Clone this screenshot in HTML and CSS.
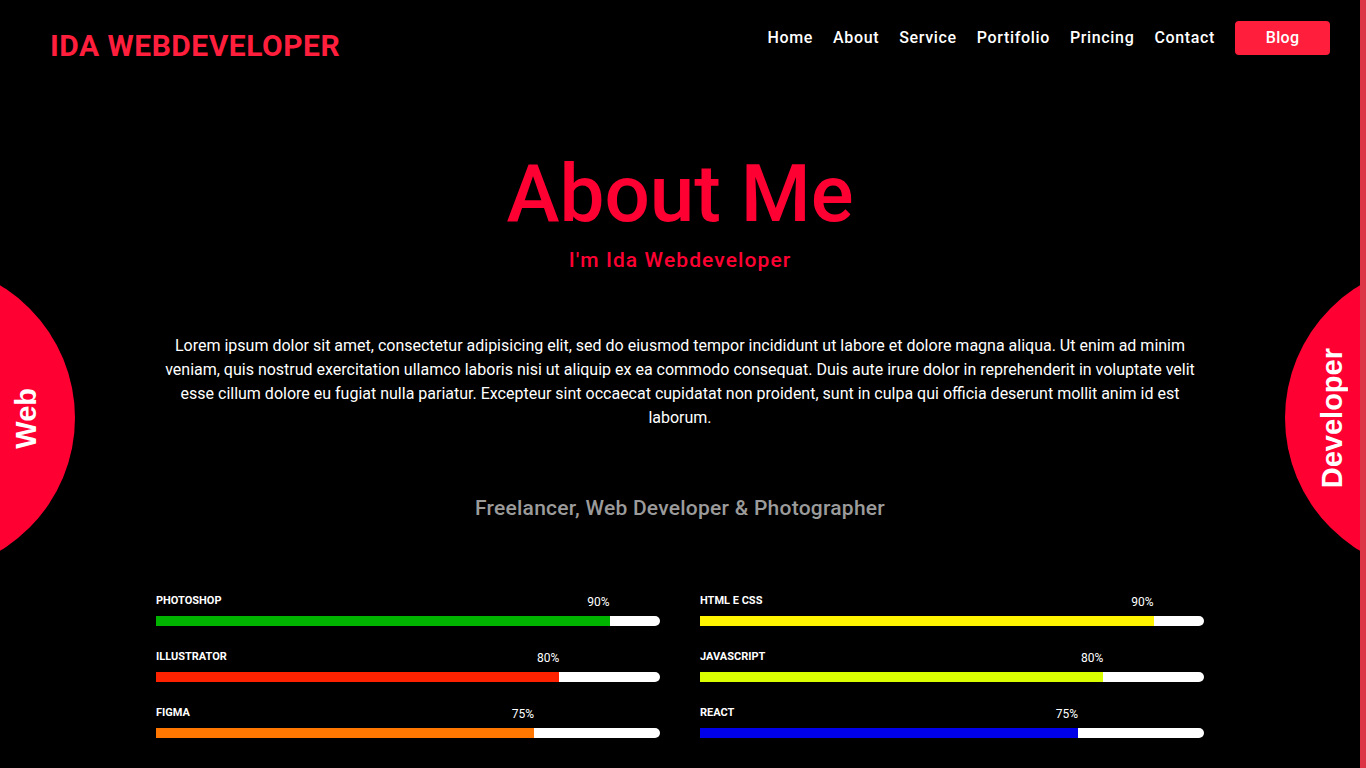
FILE: index.html
```html
<!DOCTYPE html>
<html lang="en">
<head>
<meta charset="utf-8">
<title>Ida Webdeveloper - About</title>
<link rel="stylesheet" href="styles.css">
</head>
<body>
<div class="page">
  <header class="header">
    <a class="logo" href="#">IDA WEBDEVELOPER</a>
    <nav class="nav">
      <a href="#">Home</a>
      <a href="#">About</a>
      <a href="#">Service</a>
      <a href="#">Portifolio</a>
      <a href="#">Princing</a>
      <a href="#">Contact</a>
      <a href="#" class="btn">Blog</a>
    </nav>
  </header>

  <div class="badge badge-left"><span>Web</span></div>
  <div class="badge badge-right"><span>Developer</span></div>

  <main class="about">
    <h1 class="title">About Me</h1>
    <h2 class="subtitle">I'm Ida Webdeveloper</h2>
    <p class="text">Lorem ipsum dolor sit amet, consectetur adipisicing elit, sed do eiusmod tempor incididunt ut labore et dolore magna aliqua. Ut enim ad minim veniam, quis nostrud exercitation ullamco laboris nisi ut aliquip ex ea commodo consequat. Duis aute irure dolor in reprehenderit in voluptate velit esse cillum dolore eu fugiat nulla pariatur. Excepteur sint occaecat cupidatat non proident, sunt in culpa qui officia deserunt mollit anim id est laborum.</p>
    <h3 class="role">Freelancer, Web Developer &amp; Photographer</h3>

    <div class="skills">
      <div class="col">
        <div class="skill">
          <div class="skill-top"><span class="label">PHOTOSHOP</span><span class="pct" style="width:90%">90%</span></div>
          <div class="track"><div class="fill green" style="width:90%"></div></div>
        </div>
        <div class="skill">
          <div class="skill-top"><span class="label">ILLUSTRATOR</span><span class="pct" style="width:80%">80%</span></div>
          <div class="track"><div class="fill red" style="width:80%"></div></div>
        </div>
        <div class="skill">
          <div class="skill-top"><span class="label">FIGMA</span><span class="pct" style="width:75%">75%</span></div>
          <div class="track"><div class="fill orange" style="width:75%"></div></div>
        </div>
      </div>
      <div class="col">
        <div class="skill">
          <div class="skill-top"><span class="label">HTML E CSS</span><span class="pct" style="width:90%">90%</span></div>
          <div class="track"><div class="fill yellow" style="width:90%"></div></div>
        </div>
        <div class="skill">
          <div class="skill-top"><span class="label">JAVASCRIPT</span><span class="pct" style="width:80%">80%</span></div>
          <div class="track"><div class="fill lime" style="width:80%"></div></div>
        </div>
        <div class="skill">
          <div class="skill-top"><span class="label">REACT</span><span class="pct" style="width:75%">75%</span></div>
          <div class="track"><div class="fill blue" style="width:75%"></div></div>
        </div>
      </div>
    </div>
  </main>
</div>
<div class="rail"></div>
</body>
</html>
```

FILE: styles.css
```css
* { box-sizing: border-box; }

html, body {
  margin: 0;
  padding: 0;
  background: #000;
}

body {
  display: flex;
  min-height: 100vh;
  font-family: Roboto, "Liberation Sans", Arial, sans-serif;
  color: #fff;
}

.page {
  position: relative;
  flex: 1;
  min-height: 100vh;
  overflow: hidden;
}

.rail {
  width: 6px;
  flex: none;
  background: #dc3545;
}

/* Header */
.header {
  display: flex;
  justify-content: space-between;
  align-items: flex-start;
  padding: 21px 30px 0 50px;
}

.logo {
  margin-top: 8px;
  color: #ff1f3d;
  font-weight: 700;
  font-size: 30px;
  line-height: 34px;
  letter-spacing: 0.5px;
  text-decoration: none;
}

.nav {
  display: flex;
  align-items: center;
  gap: 20px;
  height: 34px;
}

.nav a {
  color: #fff;
  text-decoration: none;
  font-size: 16px;
  font-weight: 500;
  line-height: 34px;
  letter-spacing: 0.65px;
}

.nav a.btn {
  width: 95px;
  text-align: center;
  background: #ff1f3d;
  border-radius: 4px;
  letter-spacing: 0.3px;
}

/* Side badges */
.badge {
  position: absolute;
  top: 263px;
  width: 310px;
  height: 310px;
  border-radius: 50%;
  background: #ff0033;
  display: flex;
  align-items: center;
}

.badge span {
  writing-mode: vertical-rl;
  transform: rotate(180deg);
  font-family: "Liberation Sans", Arial, sans-serif;
  font-weight: 700;
  font-size: 29px;
  line-height: 33px;
  color: #fff;
}

.badge-left {
  left: -235px;
  justify-content: flex-end;
  padding-right: 32px;
}

.badge-right {
  left: 1285px;
  justify-content: flex-start;
  padding-left: 31px;
}

/* About */
.about {
  width: 1048px;
  margin: 0 auto;
  text-align: center;
}

.title {
  margin: 91px 0 0;
  font-size: 80px;
  line-height: 80px;
  font-weight: 500;
  color: #ff0033;
}

.subtitle {
  margin: 14px 0 0;
  font-size: 21px;
  line-height: 24px;
  font-weight: 500;
  letter-spacing: 1.1px;
  color: #ff0033;
}

.text {
  margin: 62px 0 0;
  font-size: 16px;
  line-height: 24px;
  font-weight: 400;
  color: #fff;
}

.role {
  margin: 66px 0 0;
  font-size: 21px;
  line-height: 24px;
  font-weight: 500;
  letter-spacing: 0.25px;
  color: #9b9b9b;
}

/* Skills */
.skills {
  margin-top: 73px;
  display: grid;
  grid-template-columns: 1fr 1fr;
  column-gap: 40px;
  text-align: left;
}

.col {
  display: flex;
  flex-direction: column;
  gap: 23px;
}

.skill-top {
  display: grid;
  height: 23px;
}

.skill-top > * {
  grid-area: 1 / 1;
}

.label {
  justify-self: start;
  margin-top: 1px;
  font-size: 11px;
  line-height: 14px;
  font-weight: 700;
}

.pct {
  justify-self: start;
  text-align: right;
  padding-top: 2px;
  font-size: 12px;
  line-height: 14px;
  font-weight: 400;
}

.track {
  height: 10px;
  background: #fff;
  border-radius: 0 5px 5px 0;
  overflow: hidden;
}

.fill {
  height: 100%;
}

.green { background: #00b300; }
.red { background: #ff2200; }
.orange { background: #ff7700; }
.yellow { background: #fff500; }
.lime { background: #d9ff00; }
.blue { background: #0000e8; }
```
